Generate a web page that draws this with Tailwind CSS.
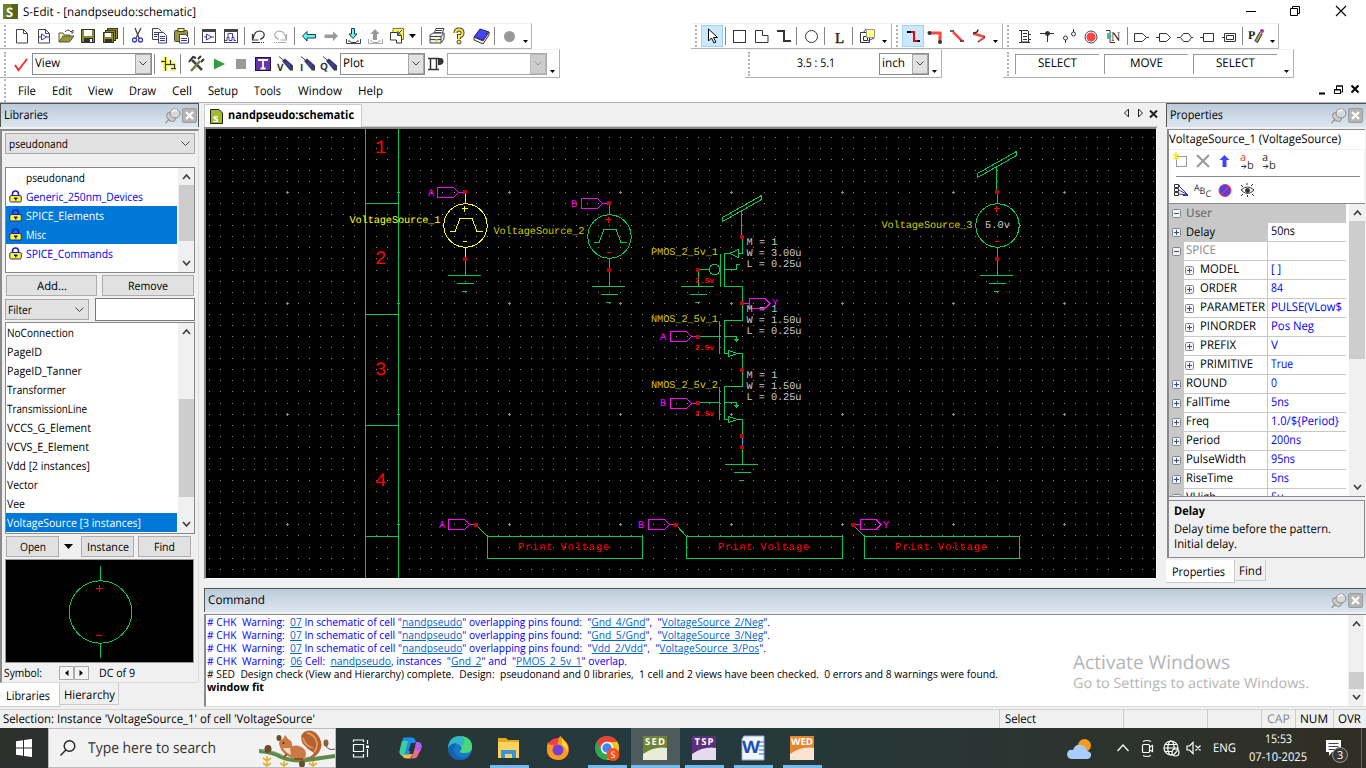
<!DOCTYPE html>
<html lang="en">
<head>
<meta charset="utf-8">
<title>S-Edit - [nandpseudo:schematic]</title>
<script src="https://cdn.jsdelivr.net/npm/@tailwindcss/browser@4"></script>
</head>
<body class="w-[1366px] h-[768px] overflow-hidden bg-[#f0f0f0] font-['Open_Sans','Noto_Sans',sans-serif] text-[12px] text-black flex flex-col whitespace-nowrap leading-none [text-rendering:geometricPrecision] [&_[data-w]]:shrink-0 [&_[data-w]]:inline-block [&_[data-w]]:origin-left">

<svg class="hidden">
  <defs>
    <g id="tri"><path d="M0 0h7L3.500 4z"/></g>
    <g id="page"><path d="M5.500 4.500h7l4 4v9.500h-11z" fill="#fff" stroke="#444"/><path d="M12.500 4.500v4h4" fill="none" stroke="#444"/></g>
    <g id="pin"><path d="M2.500 16l4-4" stroke="#999" stroke-width="1.500"/><ellipse cx="8" cy="10" rx="3.500" ry="5" transform="rotate(-45 8 10)" fill="#ccc" stroke="#8a8a8a"/><ellipse cx="12" cy="6.500" rx="5" ry="4.500" fill="#d8d8d8" stroke="#8a8a8a"/><path d="M9 5q2-3 5-1.500" stroke="#fff" stroke-width="1.500" fill="none"/></g>
    <g id="xbtn"><rect x=".5" y=".5" width="14" height="14" rx="1.500" fill="#b4b4b4" stroke="#9c9c9c"/><path d="M4 4l7 7M11 4l-7 7" stroke="#fff" stroke-width="2.200"/></g>
    <g id="lock"><path d="M3.500 6V4a3 3 0 0 1 6 0V6" fill="none" stroke="#2020c0" stroke-width="1.600"/><rect x=".8" y="5.500" width="11.500" height="6.500" rx="1.500" fill="#ff0" stroke="#2020c0"/><path d="M5 7.500h3.500v1.500h-1v1.500h-1.500v-1.500h-1z" fill="#1010c0"/></g>
    <g id="box"><rect x=".5" y=".5" width="8" height="8" rx="1" fill="#f4f4f4" stroke="#848484"/><path d="M2 4.500h5" stroke="#2a4fa0"/></g>
    <g id="boxp"><rect x=".5" y=".5" width="8" height="8" rx="1" fill="#f4f4f4" stroke="#848484"/><path d="M2 4.500h5M4.500 2v5" stroke="#2a4fa0"/></g>
    <g id="probe"><path d="M8 8l3-2.500 8 7v5h-3z" fill="#3c3c46"/><path d="M5 3.500l5 4" stroke="#444"/><path d="M12 9.500l4 4" stroke="#3a3af0" stroke-width="2"/></g>
  </defs>
</svg>

<!-- Title bar -->
<header class="h-[23px] bg-white flex items-center pl-[3px] shrink-0">
  <svg class="w-[15px] h-[15px]" viewBox="0 0 15 15"><rect width="15" height="15" fill="#6f7e1e"/><path d="M9 0h6v15H3z" fill="#566317"/><text x="3" y="12.500" font-size="13" font-weight="700" fill="#fff" font-family="Open Sans">S</text></svg>
  <span class="ml-[5px]" data-w="173">S-Edit - [nandpseudo:schematic]</span>
  <svg class="ml-auto mr-[17px] w-[110px] h-[20px]" viewBox="0 0 110 20" fill="none" stroke="#000"><path d="M7 9.500h10"/><path d="M51.500 6.500h7v7h-7z M53.500 6.500v-2h7v7h-2"/><path d="M97 4l10 10M107 4l-10 10" stroke-width="1.100"/></svg>
</header>

<!-- Toolbar row 1 -->
<div class="h-[26px] bg-white flex shrink-0">
  <div class="w-[532px] flex items-center border-b border-r border-[#b0b0b0] border-t border-t-[#f0f0f6]">
    <i class="ml-[4px] mr-[5px] h-[22px] border-l-2 border-dotted border-[#b4b4b4]"></i>
    <svg class="w-[22px] h-[22px]" viewBox="0 0 22 22"><use href="#page"/></svg>
    <svg class="w-[22px] h-[22px]" viewBox="0 0 22 22"><use href="#page"/><path d="M8.500 9v6l5-3zM6 12h3M13 12h3" fill="none" stroke="#3a3ac0"/></svg>
    <svg class="w-[22px] h-[22px]" viewBox="0 0 22 22"><path d="M4 17V8h4l1.500 2H15v2" fill="#fff8a0" stroke="#555"/><path d="M4 17l4-6h11l-4.500 6z" fill="#9a9a2a" stroke="#555"/><path d="M10 7q3-4 6 0l2-2M16 8h2V5" fill="none" stroke="#444"/></svg>
    <svg class="w-[22px] h-[22px]" viewBox="0 0 22 22"><rect x="4.500" y="4.500" width="13" height="13" fill="#8c8c28" stroke="#333"/><rect x="7" y="5" width="8" height="6" fill="#fff"/><rect x="7" y="13" width="9" height="5" fill="#333"/><rect x="13" y="14" width="2" height="3" fill="#fff"/></svg>
    <svg class="w-[22px] h-[22px]" viewBox="0 0 22 22"><rect x="8.500" y="3.500" width="10" height="10" fill="#8c8c28" stroke="#333"/><rect x="6.500" y="5.500" width="10" height="10" fill="#8c8c28" stroke="#333"/><rect x="4.500" y="7.500" width="10" height="10" fill="#8c8c28" stroke="#333"/><rect x="6" y="8" width="6" height="4" fill="#fff"/><rect x="6" y="14" width="7" height="4" fill="#333"/></svg>
    <i class="mx-[2px] w-px h-[18px] bg-[#888]"></i>
    <svg class="w-[22px] h-[22px]" viewBox="0 0 22 22" fill="none"><path d="M9 3l4 10M15 3l-5 10" stroke="#444" stroke-width="1.300"/><circle cx="8.500" cy="15" r="2" stroke="#3a3ac0" stroke-width="1.300"/><circle cx="14.500" cy="15" r="2" stroke="#3a3ac0" stroke-width="1.300"/></svg>
    <svg class="w-[22px] h-[22px]" viewBox="0 0 22 22"><path d="M4.500 3.500h6l3 3v8h-9z" fill="#fff" stroke="#444"/><path d="M6 7.500h5M6 9.500h5M6 11.500h3" stroke="#444"/><path d="M10.500 7.500h5l3 3v7.500h-8z" fill="#fff" stroke="#3a3a90"/><path d="M12 11.500h5M12 13.500h5M12 15.500h5" stroke="#3a3a90"/></svg>
    <svg class="w-[22px] h-[22px]" viewBox="0 0 22 22"><rect x="4.500" y="5.500" width="13" height="11" rx="1" fill="#98983c" stroke="#444"/><rect x="8" y="3.500" width="6" height="3" fill="#ff6" stroke="#444"/><path d="M9.500 9.500h6l3 3v5.500h-9z" fill="#fff" stroke="#3a3a90"/><path d="M11 13.500h6M11 15.500h6" stroke="#3a3a90"/></svg>
    <i class="mx-[2px] w-px h-[18px] bg-[#888]"></i>
    <svg class="ml-px w-[22px] h-[22px]" viewBox="0 0 22 22"><rect x="4.500" y="4.500" width="13" height="13" fill="#fff" stroke="#444"/><path d="M4 5.500h14" stroke="#444" stroke-width="3"/><path d="M8.500 9v6l5-3zM6 12h3M13 12h3" fill="none" stroke="#3a3ac0"/></svg>
    <svg class="w-[22px] h-[22px]" viewBox="0 0 22 22"><rect x="4.500" y="4.500" width="13" height="13" fill="#fff" stroke="#444"/><path d="M4 5.500h14" stroke="#444" stroke-width="3"/><path d="M5 15.500h2v-3h2v3h3v-3h2v3h2M8 12v-3.500h4.500v3.500" fill="none" stroke="#3a3ac0"/></svg>
    <i class="mx-[2px] w-px h-[18px] bg-[#888]"></i>
    <svg class="w-[22px] h-[22px]" viewBox="0 0 22 22" fill="none"><path d="M5.500 9v6h6M6 14q1-8 7-8 5 1 4 5-1 3-4 3" stroke="#333" stroke-width="1.200"/><path d="M5 17.500h12" stroke="#333" stroke-dasharray="8 1 1 1"/></svg>
    <svg class="w-[22px] h-[22px]" viewBox="0 0 22 22" fill="none"><path d="M17.500 9v6h-6M17 14q-1-8-7-8-5 1-4 5 1 3 4 3" stroke="#aaa" stroke-width="1.200"/><path d="M5 17.500h12" stroke="#aaa" stroke-dasharray="1 1 1 1 8"/></svg>
    <i class="mx-[3px] w-px h-[18px] bg-[#888]"></i>
    <svg class="w-[22px] h-[22px]" viewBox="0 0 22 22"><path d="M4.500 11L9 6.500V9.500h8.500v3.500H9v3z" fill="#5ff" stroke="#333"/></svg>
    <svg class="w-[22px] h-[22px]" viewBox="0 0 22 22"><path d="M18 11l-5-4.500V9.500H4.500v3.500H13v3z" fill="#999"/></svg>
    <svg class="w-[22px] h-[22px]" viewBox="0 0 22 22"><path d="M9.500 3.500h3V9h2.500l-4 4.500-4-4.500h2.500z" fill="#5ff" stroke="#333"/><path d="M4.500 14v4.500h14V14M6 16h2l1 1.500h5l1-1.500h2" fill="none" stroke="#444"/></svg>
    <svg class="w-[22px] h-[22px]" viewBox="0 0 22 22"><path d="M11 4l4.500 5H13v6H9V9H6.500z" fill="#999"/><path d="M4.500 14v4.500h14V14M6 16h2l1 1.500h5l1-1.500h2" fill="none" stroke="#aaa"/></svg>
    <svg class="w-[22px] h-[22px]" viewBox="0 0 22 22"><path d="M7 3.500h10.500v11H7z" fill="#ff3" stroke="#777"/><path d="M4.500 7.500h7v3h4v7.500h-5v-3h-6z" fill="#fff" stroke="#333"/><path d="M16 5l-4 4M12 6v3h3" stroke="#33c" fill="none"/></svg>
    <svg class="w-[9px] h-[22px]" viewBox="0 0 9 22"><use href="#tri" x="1" y="9"/></svg>
    <i class="mx-[4px] w-px h-[18px] bg-[#888]"></i>
    <svg class="w-[22px] h-[22px]" viewBox="0 0 22 22"><path d="M8 9l2-5.500h8L16 9" fill="#fff" stroke="#444"/><path d="M4 10l3-2h11v6l-3 4H4z" fill="#eee" stroke="#444"/><path d="M4 11.500h11l3-3M4 14.500h11M15 11v7M10 5.500h6M9 7.500h6" stroke="#444" fill="none"/><path d="M9 15.500h3" stroke="#dd0" stroke-width="2"/></svg>
    <svg class="w-[22px] h-[22px]" viewBox="0 0 22 22"><path d="M7.500 8q0-3.500 3.500-3.500t3.500 3.500-3.500 3v3" fill="none" stroke="#444" stroke-width="4"/><path d="M7.500 8q0-3.500 3.500-3.500t3.500 3.500-3.500 3v3" fill="none" stroke="#fe3" stroke-width="2"/><circle cx="11" cy="17" r="2" fill="#fe3" stroke="#444"/></svg>
    <svg class="w-[22px] h-[22px]" viewBox="0 0 22 22"><path d="M4 12l6-8 9 3-6 8z" fill="#44f" stroke="#226"/><path d="M4 12v3l9 4 6-9V7l-6 9z" fill="#eee" stroke="#333"/></svg>
    <i class="mx-[2px] w-px h-[18px] bg-[#888]"></i>
    <svg class="w-[26px] h-[22px]" viewBox="0 0 26 22"><circle cx="12.500" cy="11.500" r="5.500" fill="#999"/></svg>
    <svg class="w-[8px] h-[22px]" viewBox="0 0 8 22"><path d="M0 15h5L2.500 18z"/></svg>
  </div>
  <div class="ml-[159px] w-[201px] flex items-center border-b border-r border-[#b0b0b0] border-t border-t-[#f0f0f6]">
    <i class="ml-[4px] mr-[4px] h-[22px] border-l-2 border-dotted border-[#b4b4b4]"></i>
    <svg class="w-[22px] h-[22px] bg-[#cce8ff] border border-[#99d1ff]" viewBox="1 1 20 20"><path d="M7.500 4v12l3-3 2.500 5 2-1-2.500-4.500h4z" fill="#fff" stroke="#000"/></svg>
    <i class="mx-[2px] w-px h-[18px] bg-[#888]"></i>
    <svg class="w-[22px] h-[22px]" viewBox="0 0 22 22" fill="none" stroke="#333"><rect x="5.500" y="5.500" width="12" height="12"/></svg>
    <svg class="w-[22px] h-[22px]" viewBox="0 0 22 22" fill="none" stroke="#333"><path d="M5.500 5.500h7v5h5.500v7H5.500z"/></svg>
    <svg class="w-[22px] h-[22px]" viewBox="0 0 22 22" fill="none" stroke="#333" stroke-width="2"><path d="M5 6h7v10h7"/></svg>
    <i class="mx-[2px] w-px h-[18px] bg-[#888]"></i>
    <svg class="ml-px w-[22px] h-[22px]" viewBox="0 0 22 22" fill="none" stroke="#333"><circle cx="11.500" cy="11.500" r="6"/></svg>
    <i class="mx-[2px] w-px h-[18px] bg-[#888]"></i>
    <svg class="ml-px w-[22px] h-[22px]" viewBox="0 0 22 22"><text x="7" y="18" font-family="Liberation Serif" font-size="15" fill="#222" stroke="#222" stroke-width=".4">L</text></svg>
    <i class="mx-[2px] w-px h-[18px] bg-[#888]"></i>
    <svg class="w-[24px] h-[22px]" viewBox="0 0 24 22" fill="none" stroke="#333"><path d="M5.500 7.500h9v10h-9zM8.500 11.500h4v4h-4z"/><path d="M11.500 4.500h8v8h-8z" fill="#ff8" stroke="#998"/><path d="M8 8l3-4M13 16l6-3" stroke="#33c"/></svg>
    <svg class="w-[9px] h-[22px]" viewBox="0 0 9 22"><path d="M3 15h5L5.500 18z"/></svg>
  </div>
  <div class="w-[111px] flex items-center border-b border-r border-[#b0b0b0] border-t border-t-[#f0f0f6]">
    <i class="ml-[4px] mr-[4px] h-[22px] border-l-2 border-dotted border-[#b4b4b4]"></i>
    <svg class="w-[22px] h-[22px] bg-[#cce8ff] border border-[#99d1ff]" viewBox="1 1 20 20" fill="none" stroke-width="2"><path d="M5 7h6M12 16h6" stroke="#000"/><path d="M9 7h3v9h3" stroke="#e00"/></svg>
    <svg class="w-[22px] h-[22px]" viewBox="0 0 22 22" fill="none"><path d="M5 8h11v8" stroke="#f44" stroke-width="3"/><circle cx="5.500" cy="8" r="2" fill="#333"/><circle cx="16" cy="17" r="2" fill="#333"/></svg>
    <svg class="w-[22px] h-[22px]" viewBox="0 0 22 22" fill="none"><path d="M7 7l9 9" stroke="#f44" stroke-width="2.500"/><path d="M4 6h4M14 16h4" stroke="#333" stroke-width="1.500"/></svg>
    <svg class="w-[22px] h-[22px]" viewBox="0 0 22 22" fill="none"><path d="M5 8.500l12 3.500" stroke="#f44" stroke-width="2.500"/><path d="M5 8q5 0 5-3.500M17 12l-7 5" stroke="#333" stroke-width="1.500"/><path d="M11 16l5-3" stroke="#f44" stroke-width="2"/></svg>
    <svg class="w-[9px] h-[22px]" viewBox="0 0 9 22"><path d="M3 15h5L5.500 18z"/></svg>
  </div>
  <div class="w-[276px] flex items-center border-b border-r border-[#b0b0b0] border-t border-t-[#f0f0f6]">
    <i class="ml-[4px] mr-[5px] h-[22px] border-l-2 border-dotted border-[#b4b4b4]"></i>
    <svg class="w-[22px] h-[22px]" viewBox="0 0 22 22" fill="none" stroke="#333"><path d="M5 5.500h9M5 17.500h11M7.500 6v11h7V6M9 8.500h4M9 11.500h4M9 14.500h4M14 9.500h3M14 14.500h3"/></svg>
    <svg class="w-[22px] h-[22px]" viewBox="0 0 22 22" fill="#333" stroke="#333"><path d="M4 8.500h14M11.500 8v9"/><circle cx="11.500" cy="8.500" r="2"/></svg>
    <svg class="w-[22px] h-[22px]" viewBox="0 0 22 22" fill="none" stroke="#333"><circle cx="7.500" cy="13" r="2"/><path d="M7.500 15v3M15.500 4v3"/><circle cx="15.500" cy="9" r="2"/></svg>
    <svg class="w-[22px] h-[22px]" viewBox="0 0 22 22"><circle cx="11" cy="12" r="6" fill="#fff" stroke="#444"/><circle cx="11" cy="12" r="4.500" fill="#f44"/></svg>
    <svg class="w-[22px] h-[22px]" viewBox="0 0 22 22"><path d="M4 5.500h4v12h5M6 8v6" stroke="#333" fill="none"/><circle cx="7.500" cy="11" r="1.800" fill="#0cc"/><text x="9" y="16" font-size="13" font-family="Liberation Serif" fill="#222">N</text></svg>
    <i class="ml-[3px] mr-[2px] w-px h-[18px] bg-[#888]"></i>
    <svg class="w-[22px] h-[22px]" viewBox="0 0 22 22" fill="none" stroke="#333"><path d="M4.500 8.500h8l4 4-4 4h-8zM16 12.500h3"/></svg>
    <svg class="w-[22px] h-[22px]" viewBox="0 0 22 22" fill="none" stroke="#333"><path d="M7.500 8.500h7l4 4-4 4h-7zM4 12.500h3"/></svg>
    <svg class="w-[22px] h-[22px]" viewBox="0 0 22 22" fill="none" stroke="#333"><path d="M6.500 12.500l3-4h5l3 4-3 4h-5zM3 12.500h3M17 12.500h2"/></svg>
    <svg class="w-[22px] h-[22px]" viewBox="0 0 22 22" fill="none" stroke="#333"><path d="M7.500 8.500h10v8h-10zM4 12.500h3"/></svg>
    <svg class="w-[22px] h-[22px]" viewBox="0 0 22 22" fill="none" stroke="#333"><path d="M6.500 8.500h11v8h-11zM8.500 10.500h7v4h-7zM4 12.500h2"/></svg>
    <i class="mx-[2px] w-px h-[18px] bg-[#888]"></i>
    <svg class="w-[22px] h-[22px]" viewBox="0 0 22 22"><text x="3" y="14" font-size="12" font-weight="700" font-family="Liberation Serif" fill="#222">P</text><path d="M11 17l5-9" stroke="#444" stroke-width="4"/><path d="M11.500 16l4.500-8" stroke="#aa4" stroke-width="2"/><circle cx="17" cy="6" r="2" fill="#a3a"/></svg>
    <svg class="w-[9px] h-[22px]" viewBox="0 0 9 22"><path d="M3 15h5L5.500 18z"/></svg>
  </div>
</div>

<!-- Toolbar row 2 -->
<div class="h-[29px] bg-white flex shrink-0 [&_[data-w]]:pb-[2px]">
  <div class="w-[560px] flex items-center border-b border-r border-[#b0b0b0] border-t border-t-[#f0f0f6]">
    <i class="ml-[4px] mr-[4px] h-[24px] border-l-2 border-dotted border-[#b4b4b4]"></i>
    <svg class="w-[22px] h-[22px]" viewBox="0 0 22 22"><path d="M5 12l3.500 5L17 6" fill="none" stroke="#e33" stroke-width="2"/></svg>
    <div class="w-[120px] h-[22px] border border-[#8a8a8a] flex items-center bg-white"><span class="ml-[2px]" data-w="25">View</span><i class="ml-auto w-[16px] h-[20px] bg-[#e1e1e1] border border-[#a8a8a8] flex items-center justify-center"><svg class="w-[8px] h-[5px]" viewBox="0 0 8 5"><path d="M.5.500L4 4 7.500.5" fill="none" stroke="#444"/></svg></i></div>
    <i class="mx-[2px] w-px h-[20px] bg-[#888]"></i>
    <svg class="w-[22px] h-[22px]" viewBox="0 0 22 22" fill="none"><path d="M4 8.500h5M8.500 4v14M8 11.500h10M13.500 7v5M17.500 11v5M14 16h5M6 14h4" stroke="#ee2" stroke-width="3.500"/><path d="M4 8.500h5M8.500 4v14M8 11.500h10M13.500 7v5M17.500 11v5M14 15.500h5" stroke="#335"/></svg>
    <i class="mx-[1px] w-px h-[20px] bg-[#888]"></i>
    <svg class="ml-[2px] w-[24px] h-[22px]" viewBox="0 0 24 22" fill="none"><path d="M18 17L8 7" stroke="#444" stroke-width="2.500"/><path d="M7 18L16 8" stroke="#774" stroke-width="2.500"/><path d="M5 9l4-5 3 1M14 6l3-3M17 9l3-3" stroke="#333" stroke-width="2"/></svg>
    <svg class="w-[22px] h-[22px]" viewBox="0 0 22 22"><path d="M6 5.500L17 11 6 16.500z" fill="#2f9e3c"/></svg>
    <svg class="w-[22px] h-[22px]" viewBox="0 0 22 22"><rect x="6" y="6" width="10" height="10" fill="#999"/></svg>
    <svg class="w-[22px] h-[22px]" viewBox="0 0 22 22"><rect x="3.500" y="4.500" width="15" height="13" fill="#63a" stroke="#213"/><path d="M6 7h10M11 7v9M8.500 15.500h5" stroke="#fff" stroke-width="1.800"/></svg>
    <svg class="w-[22px] h-[22px]" viewBox="0 0 22 22"><use href="#probe"/><text x="3" y="18" font-size="10" font-weight="700" fill="#333">V</text></svg>
    <svg class="w-[22px] h-[22px]" viewBox="0 0 22 22"><use href="#probe"/><text x="4" y="18" font-size="10" font-weight="700" fill="#333">I</text></svg>
    <svg class="w-[22px] h-[22px]" viewBox="0 0 22 22"><use href="#probe"/><text x="2" y="17" font-size="10" font-weight="700" fill="#333">Q</text></svg>
    <div class="w-[85px] h-[22px] border border-[#8a8a8a] flex items-center bg-white"><span class="ml-[2px]" data-w="21">Plot</span><i class="ml-auto w-[16px] h-[20px] bg-[#e1e1e1] border border-[#a8a8a8] flex items-center justify-center"><svg class="w-[8px] h-[5px]" viewBox="0 0 8 5"><path d="M.5.500L4 4 7.500.5" fill="none" stroke="#444"/></svg></i></div>
    <svg class="w-[22px] h-[22px]" viewBox="0 0 22 22"><path d="M3 5.500h7M3 16.500h7M5.500 5v12M10 5.500h4M11.500 5v12M9 16.500h5" stroke="#333" stroke-width="1.500"/><path d="M13 5h2q3.500 0 3.500 3.200T15 12h-2z" fill="#333"/></svg>
    <div class="w-[100px] h-[22px] border border-[#a8a8a8] flex items-center bg-white"><i class="ml-auto w-[16px] h-[20px] bg-[#ccc] border border-[#bbb] flex items-center justify-center"><svg class="w-[8px] h-[5px]" viewBox="0 0 8 5"><path d="M.5.500L4 4 7.500.5" fill="none" stroke="#999"/></svg></i></div>
    <svg class="w-[9px] h-[22px]" viewBox="0 0 9 22"><path d="M3 17h5L5.500 20z"/></svg>
  </div>
  <div class="ml-[185px] w-[197px] flex items-center border-b border-r border-[#b0b0b0] border-t border-t-[#f0f0f6]">
    <i class="ml-[3px] h-[24px] border-l-2 border-dotted border-[#b4b4b4]"></i>
    <span class="ml-[47px]" data-w="38">3.5 : 5.1</span>
    <div class="ml-[44px] w-[50px] h-[22px] border border-[#8a8a8a] flex items-center bg-white"><span class="ml-[2px]" data-w="23">inch</span><i class="ml-auto w-[16px] h-[20px] bg-[#e1e1e1] border border-[#a8a8a8] flex items-center justify-center"><svg class="w-[8px] h-[5px]" viewBox="0 0 8 5"><path d="M.5.500L4 4 7.500.5" fill="none" stroke="#444"/></svg></i></div>
    <svg class="w-[9px] h-[22px]" viewBox="0 0 9 22"><path d="M3 17h5L5.500 20z"/></svg>
  </div>
  <div class="ml-[61px] w-[291px] flex items-center border-b border-r border-[#b0b0b0] border-t border-t-[#f0f0f6]">
    <i class="ml-[4px] mr-[6px] h-[24px] border-l-2 border-dotted border-[#b4b4b4]"></i>
    <div class="w-[84px] h-[20px] border-l border-t border-[#999] flex items-center justify-center mr-[5px]"><span data-w="39">SELECT</span></div>
    <div class="w-[84px] h-[20px] border-l border-t border-[#999] flex items-center justify-center mr-[5px]"><span data-w="33">MOVE</span></div>
    <div class="w-[84px] h-[20px] border-l border-t border-[#999] flex items-center justify-center"><span data-w="39">SELECT</span></div>
    <svg class="ml-[4px] w-[9px] h-[22px]" viewBox="0 0 9 22"><path d="M3 17h5L5.500 20z"/></svg>
  </div>
</div>

<!-- Menu -->
<nav class="h-[25px] bg-white border-b border-[#b0b0b0] flex items-center shrink-0 pl-[4px] [&_[data-w]]:pt-px">
  <i class="h-[23px] border-l-2 border-dotted border-[#b4b4b4]"></i>
  <span class="ml-[12px]" data-w="18">File</span><span class="ml-[16px]" data-w="20">Edit</span><span class="ml-[16px]" data-w="25">View</span><span class="ml-[16px]" data-w="27">Draw</span><span class="ml-[16px]" data-w="20">Cell</span><span class="ml-[16px]" data-w="30">Setup</span><span class="ml-[16px]" data-w="27">Tools</span><span class="ml-[17px]" data-w="44">Window</span><span class="ml-[16px]" data-w="25">Help</span>
  <svg class="ml-auto mr-[4px] w-[44px] h-[16px]" viewBox="0 0 44 16" fill="none" stroke="#000"><path d="M1 11.500h6" stroke-width="2"/><path d="M16.500 7.500h6v4h-6zM18.500 7v-3h6v6h-2M18 4h7M16 8h7"/><path d="M33.500 3.500l7 7M40.500 3.500l-7 7" stroke-width="2"/></svg>
</nav>

<!-- Work area -->
<main class="flex h-[606px] shrink-0">
  <!-- Libraries dock -->
  <aside class="w-[199px] flex flex-col">
    <div class="h-[24px] border-t border-l border-r border-[#555] bg-linear-to-b from-[#bccbda] to-[#dde6ef] flex items-center pl-[3px] [&_[data-w]]:pb-[2px]"><span data-w="44">Libraries</span><svg class="ml-auto w-[18px] h-[18px]" viewBox="0 0 18 18"><use href="#pin"/></svg><svg class="ml-[1px] mr-[1px] w-[15px] h-[15px]" viewBox="0 0 15 15"><use href="#xbtn"/></svg></div>
    <div class="mt-[2px] h-[554px] border-t-2 border-l-2 border-[#8a8a8a] border-r border-r-[#ddd] border-b border-b-[#ddd] flex flex-col pl-[3px] pt-[2px] [&_[data-w]]:pt-[2px]">
      <div class="w-[190px] h-[21px] bg-[#e1e1e1] border border-[#a8a8a8] flex items-center justify-between pl-[3px] pr-[4px]"><span class="text-[11.500px]" data-w="59">pseudonand</span><svg class="w-[9px] h-[5px]" viewBox="0 0 9 5"><path d="M.5.500l4 4 4-4" fill="none" stroke="#444"/></svg></div>
      <div class="mt-[13px] w-[190px] h-[106px] border border-[#888] bg-white flex text-[11.500px]">
        <div class="w-[171px] text-[#00e]">
          <div class="h-[19px] flex items-center pl-[20px] text-black"><span data-w="59">pseudonand</span></div>
          <div class="h-[19px] flex items-center pl-[3px]"><svg class="w-[13px] h-[13px] mr-[4px]" viewBox="0 0 13 13"><use href="#lock"/></svg><span data-w="117">Generic_250nm_Devices</span></div>
          <div class="h-[19px] flex items-center pl-[3px] bg-[#0078d7] text-white"><svg class="w-[13px] h-[13px] mr-[4px]" viewBox="0 0 13 13"><use href="#lock"/></svg><span data-w="78">SPICE_Elements</span></div>
          <div class="h-[19px] flex items-center pl-[3px] bg-[#0078d7] text-white"><svg class="w-[13px] h-[13px] mr-[4px]" viewBox="0 0 13 13"><use href="#lock"/></svg><span data-w="20">Misc</span></div>
          <div class="h-[19px] flex items-center pl-[3px]"><svg class="w-[13px] h-[13px] mr-[4px]" viewBox="0 0 13 13"><use href="#lock"/></svg><span data-w="87">SPICE_Commands</span></div>
        </div>
        <div class="ml-[1px] w-[16px] bg-[#f0f0f0] flex flex-col items-center"><svg class="w-[9px] h-[17px]" viewBox="0 0 9 17"><path d="M1 11l3.500-4L8 11" fill="none" stroke="#444" stroke-width="1.800"/></svg><i class="w-[15px] h-[56px] bg-[#cdcdcd]"></i><svg class="mt-auto w-[9px] h-[17px]" viewBox="0 0 9 17"><path d="M1 6l3.500 4L8 6" fill="none" stroke="#444" stroke-width="1.800"/></svg></div>
      </div>
      <div class="mt-[2px] ml-[1px] flex gap-[5px] text-[11.500px]"><div class="w-[91px] h-[21px] bg-[#e1e1e1] border border-[#adadad] flex items-center justify-center"><span data-w="30">Add...</span></div><div class="w-[92px] h-[21px] bg-[#e1e1e1] border border-[#adadad] flex items-center justify-center"><span data-w="40">Remove</span></div></div>
      <div class="mt-[2px] flex gap-[6px] text-[11.500px]"><div class="mt-px w-[84px] h-[21px] bg-[#e1e1e1] border border-[#a8a8a8] flex items-center justify-between pl-[2px] pr-[4px]"><span data-w="24">Filter</span><svg class="w-[9px] h-[5px]" viewBox="0 0 9 5"><path d="M.5.500l4 4 4-4" fill="none" stroke="#444"/></svg></div><div class="w-[100px] h-[23px] bg-white border border-[#7a7a7a]"></div></div>
      <div class="mt-[1px] w-[190px] h-[212px] border border-[#888] bg-white flex text-[11.500px]">
        <div class="w-[171px]">
          <div class="h-[19px] flex items-center pl-[1px]"><span data-w="67">NoConnection</span></div>
          <div class="h-[19px] flex items-center pl-[1px]"><span data-w="35">PageID</span></div>
          <div class="h-[19px] flex items-center pl-[1px]"><span data-w="75">PageID_Tanner</span></div>
          <div class="h-[19px] flex items-center pl-[1px]"><span data-w="59">Transformer</span></div>
          <div class="h-[19px] flex items-center pl-[1px]"><span data-w="80">TransmissionLine</span></div>
          <div class="h-[19px] flex items-center pl-[1px]"><span data-w="84">VCCS_G_Element</span></div>
          <div class="h-[19px] flex items-center pl-[1px]"><span data-w="82">VCVS_E_Element</span></div>
          <div class="h-[19px] flex items-center pl-[1px]"><span data-w="83">Vdd [2 instances]</span></div>
          <div class="h-[19px] flex items-center pl-[1px]"><span data-w="31">Vector</span></div>
          <div class="h-[19px] flex items-center pl-[1px]"><span data-w="18">Vee</span></div>
          <div class="h-[19px] flex items-center pl-[1px] bg-[#0078d7] text-white"><span data-w="134">VoltageSource [3 instances]</span></div>
        </div>
        <div class="ml-[1px] w-[16px] bg-[#f0f0f0] flex flex-col items-center"><svg class="w-[9px] h-[17px]" viewBox="0 0 9 17"><path d="M1 11l3.500-4L8 11" fill="none" stroke="#444" stroke-width="1.800"/></svg><i class="mt-[59px] w-[15px] h-[98px] bg-[#cdcdcd]"></i><svg class="mt-auto w-[9px] h-[17px]" viewBox="0 0 9 17"><path d="M1 6l3.500 4L8 6" fill="none" stroke="#444" stroke-width="1.800"/></svg></div>
      </div>
      <div class="mt-[2px] ml-[1px] flex items-center text-[11.500px]"><div class="w-[53px] h-[21px] bg-[#e1e1e1] border border-[#adadad] flex items-center justify-center"><span data-w="26">Open</span></div><svg class="mx-[4px] w-[13px] h-[8px]" viewBox="0 0 13 8"><path d="M1 1h9L5.500 6z"/></svg><div class="ml-[1px] w-[53px] h-[21px] bg-[#e1e1e1] border border-[#adadad] flex items-center justify-center"><span data-w="42">Instance</span></div><div class="ml-[4px] w-[53px] h-[21px] bg-[#e1e1e1] border border-[#adadad] flex items-center justify-center"><span data-w="21">Find</span></div></div>
      <svg class="mt-[2px] w-[189px] h-[104px] bg-black border border-[#999]" viewBox="6 560 187 102" fill="none" shape-rendering="crispEdges"><path d="M100.500 566v15M100.500 643v15" stroke="#00c864"/><circle cx="100.500" cy="612" r="31.200" stroke="#00c864"/><path d="M96 588.500h7M99.500 585v7M96 635.500h6" stroke="#f00"/></svg>
      <div class="flex items-center mt-[3px] text-[11.500px]"><span class="-ml-px" data-w="38">Symbol:</span>
        <svg class="ml-[17px] w-[30px] h-[14px]" viewBox="0 0 30 14"><path d="M.5.500h14v13H.5zM15.500.5h14v13h-14z" fill="#f4f4f4" stroke="#aaa"/><path d="M9.500 4v6L6 7zM20.500 4v6L24 7z"/></svg>
        <span class="ml-[10px]" data-w="36">DC of 9</span></div>
    </div>
    <div class="flex items-start"><div class="w-[60px] h-[24px] bg-white border-r border-b border-[#ccc] flex items-center pl-[6px] pt-[2px]"><span data-w="44">Libraries</span></div><div class="w-[59px] h-[22px] border-r border-b border-[#ccc] flex items-center pl-[4px] pt-[2px]"><span data-w="51">Hierarchy</span></div></div>
  </aside>

  <div class="ml-[5px] flex flex-col w-[1162px]">
    <div class="flex h-[482px]">
      <!-- Schematic view -->
      <section class="w-[954px] flex flex-col">
        <div class="h-[24px] flex items-end pt-[1px] [&_[data-w]]:pb-[2px]">
          <div class="h-full w-[158px] bg-white border-l border-t border-r border-[#ccc] flex items-center pl-[5px]"><svg class="w-[13px] h-[15px]" viewBox="0 0 13 15"><path d="M.5.500H9l3.500 3.500v10.500H.5z" fill="#a4bc28" stroke="#222"/><text x="3" y="12.500" font-size="11" font-weight="700" fill="#fff">s</text></svg><span class="ml-[5px] font-bold" data-w="126">nandpseudo:schematic</span></div>
          <div class="flex-1 h-full border-b border-[#ccc] flex items-center justify-end"><svg class="w-[40px] h-[14px]" viewBox="0 0 40 14" fill="none" stroke="#222"><path d="M10.500 1v8L6.500 5zM20.500 1v8l4-4z"/><path d="M32 2.500l7 7M39 2.500l-7 7" stroke-width="2"/></svg></div>
        </div>
        <svg class="h-[452px] w-[953px] border-t-2 border-l-2 border-[#888] border-r border-r-white border-b border-b-white bg-black" viewBox="206 129 950 449" id="sch" fill="none" stroke="#00c864" shape-rendering="crispEdges" font-family="'Liberation Mono',monospace" font-size="10.300">
          <path id="dots" stroke="none" fill="#8c8c8c"/>
          <path d="M365.500 128v450M398.500 128v450M365 203.500h33M365 314.500h33M365 425.500h33M365 536.500h33"/>
          <g fill="#f00" stroke="none" font-size="19"><text x="375" y="153">1</text><text x="375" y="264">2</text><text x="375" y="375">3</text><text x="375" y="486">4</text></g>
          <g id="gnd"><path d="M465.500 259v16.500M448 275.500h33M457 283.500h17M462 291.500h5"/></g>
          <use href="#gnd" x="144" y="11"/><use href="#gnd" x="532"/>
          <g stroke="#ff0"><circle cx="465.500" cy="225.500" r="21.700"/><path d="M465.500 192v12M465.500 247v12M462 208.500h6M464.500 206v6M463 241.500h4M450 231.500h5l5-13h12l5 13h6"/></g>
          <circle cx="609.500" cy="236.500" r="21.700"/><path d="M609.500 203v12M609.500 258v12M594 242.500h5l5-13h12l5 13h6"/><path d="M605 219.500h6M608.500 217v6M607 252.500h4" stroke="#f00"/>
          <circle cx="997.500" cy="225.500" r="21.700"/><path d="M997.500 192v12M997.500 247v12"/><path d="M994 208.500h6M996.500 206v6M995 241.500h4" stroke="#f00"/>
          <g id="vdd"><path d="M722.500 217.500L761.500 195.500v4L722.500 221.500zM741.500 210v27"/></g><use href="#vdd" x="255" y="-44"/>
          <g id="port" stroke="#f0f"><path d="M437.500 187.500h16l5 5-5 5h-16zM458 192.500h7"/></g>
          <use href="#port" x="144" y="11"/><use href="#port" x="233" y="144"/><use href="#port" x="233" y="211"/><use href="#port" x="11" y="332"/><use href="#port" x="211" y="332"/>
          <g stroke="#f0f"><path d="M742 303.500h7M749.500 298.500h15.500l5 5-5 5h-15.500zM853 524.500h7M860.500 519.500h15.500l5 5-5 5h-15.500z"/></g>
          <path d="M742.500 237v16.500h-4M724 253.500h5M729.500 253.500l9-4v8zM720.500 254v33M724.500 254v33M724 269.500h12v-5h4M724 286.500h18.500v34H724M698 269.500h11M698.500 270v17M681 286.500h33M690 294.500h17M695 302.500h5"/><circle cx="714.500" cy="269.500" r="5.300"/>
          <g id="nmos"><path d="M719.500 321v33M724.500 321v33M698 336.500h21M724 336.500h12.500v5M734 339.500h5M735 340.500h3M724 353.500h4M728.500 350.500v6l9-3zM737 353.500h5.500V370"/></g>
          <use href="#nmos" y="66"/><path d="M742.500 370v16.500H724M742.500 447v17.500M725 464.500h33M734 472.500h17M739 480.500h5"/><path d="M742.500 436v11" stroke="#3af"/>
          <path d="M476 525l11.500 11.500M676 525l10.500 11.500M853 525l11.500 11.500M487.500 536.500h155v22h-155zM686.500 536.500h156v22h-156zM864.500 536.500h155v22h-155z"/>
          <path fill="#c00000" stroke="none" d="M463 190h4v4h-4zM463 257h4v4h-4zM607 201h4v4h-4zM607 268h4v4h-4zM995 190h4v4h-4zM995 257h4v4h-4zM740 235h4v4h-4zM696 268h4v4h-4zM740 301h4v4h-4zM696 335h4v4h-4zM740 368h4v4h-4zM696 401h4v4h-4zM740 434h4v4h-4zM740 445h4v4h-4zM474 523h4v4h-4zM674 523h4v4h-4zM851 523h4v4h-4z"/>
          <g stroke="none">
            <g fill="#ff0"><text x="349.500" y="223" textLength="91">VoltageSource_1</text></g>
            <g fill="#d2c800"><text x="493.500" y="234" textLength="91">VoltageSource_2</text><text x="881.500" y="228" textLength="91">VoltageSource_3</text><text x="651" y="255" textLength="67">PMOS_2_5v_1</text><text x="651" y="322" textLength="67">NMOS_2_5v_1</text><text x="651" y="388" textLength="67">NMOS_2_5v_2</text></g>
            <g fill="#f0f"><text x="428" y="196">A</text><text x="571" y="207">B</text><text x="660" y="340">A</text><text x="660" y="406">B</text><text x="772" y="306">Y</text><text x="439" y="528">A</text><text x="638" y="528">B</text><text x="883" y="528">Y</text></g>
            <g fill="#c8c8c8"><text x="985" y="228" textLength="25">5.0v</text>
              <text x="746.500" y="245" textLength="31">M = 1</text><text x="746.500" y="256" textLength="55">W = 3.00u</text><text x="746.500" y="267" textLength="55">L = 0.25u</text>
              <text x="746.500" y="312" textLength="31">M = 1</text><text x="746.500" y="323" textLength="55">W = 1.50u</text><text x="746.500" y="334" textLength="55">L = 0.25u</text>
              <text x="746.500" y="378" textLength="31">M = 1</text><text x="746.500" y="389" textLength="55">W = 1.50u</text><text x="746.500" y="400" textLength="55">L = 0.25u</text></g>
            <g fill="#f00"><g font-size="7.500" font-weight="700"><text x="695" y="283" textLength="19">2.5v</text><text x="695" y="350" textLength="19">2.5v</text><text x="695" y="416" textLength="19">2.5v</text></g>
              <g font-size="10.500"><text x="518" y="550" textLength="91">Print Voltage</text><text x="718" y="550" textLength="91">Print Voltage</text><text x="895" y="550" textLength="92">Print Voltage</text></g></g>
          </g>
        </svg>
      </section>

      <!-- Properties dock -->
      <aside class="ml-[8px] w-[200px] flex flex-col">
        <div class="h-[24px] border-t border-l border-[#555] bg-linear-to-b from-[#bccbda] to-[#dde6ef] flex items-center pl-[3px] [&_[data-w]]:pb-[2px]"><span data-w="53">Properties</span><svg class="ml-auto w-[18px] h-[18px]" viewBox="0 0 18 18"><use href="#pin"/></svg><svg class="ml-[1px] mr-[3px] w-[15px] h-[15px]" viewBox="0 0 15 15"><use href="#xbtn"/></svg></div>
        <div class="mt-[2px] ml-[1px] w-[198px] border-t border-l-2 border-[#8a8a92]">
          <div class="h-[20px] bg-white flex items-center border-b border-[#eee] pb-[2px]"><span data-w="172">VoltageSource_1 (VoltageSource)</span></div>
          <svg class="w-[195px] h-[53px] bg-white block" viewBox="1169 150 195 53" fill="none" stroke="#333"><path d="M1176 176.500h184" stroke="#888"/><path d="M1176.500 156.500h10v10h-10z" stroke-dasharray="1 1"/><path d="M1173 154l6 5M1179 154l-6 5M1176 152v8" stroke="#ee2" stroke-width="1.500"/><path d="M1197 155l12 12M1209 155l-12 12" stroke="#999" stroke-width="2"/><path d="M1224.500 155l5 5h-3v7h-4v-7h-3z" fill="#44f" stroke="none"/><g stroke="none" font-size="11" fill="#333"><text x="1240" y="161" fill="#f33">a</text><text x="1247" y="169">b</text><text x="1262" y="161">a</text><text x="1269" y="169">b</text></g><path d="M1241 166.500h5M1244 164.500l2 2-2 2M1263 166.500h5M1266 164.500l2 2-2 2"/><path d="M1174.500 184.500h4v3h-4zM1174.500 188.500h4v3h-4zM1174.500 192.500h4v3h-4z"/><path d="M1179 186l9 9M1179 190l9 5M1179 194l9 1" stroke="#33c"/><path d="M1178 186l2-1M1183 195.500h5"/><g stroke="none" fill="#333" font-size="9"><text x="1194" y="191">A</text><text x="1199.500" y="194">B</text><text x="1205.500" y="197">C</text></g><circle cx="1225" cy="190.500" r="6" fill="#44f" stroke="#f33"/><path d="M1221 194.500l8-8" stroke="#f33" stroke-width="1.500"/><path d="M1241 190q6.500-6 13 0M1241 190q6.500 7 13 0M1243 187l-2-2M1247 185v-2M1251 186l2-2M1243 194l-2 2M1247.500 195v2M1252 194l2 2"/><circle cx="1247.500" cy="190.500" r="2" fill="#333"/></svg>
          <div class="h-[294px] border-y border-[#8a8a92] flex bg-white overflow-hidden [&_[data-w]]:pb-[2px]">
            <div class="w-[177px]">
              <div class="h-[19px] bg-[#c8c8c8] flex items-center pl-[3px]"><svg class="w-[9px] h-[9px]" viewBox="0 0 9 9"><use href="#box"/></svg><span class="ml-[5px] text-[#777] font-semibold" data-w="26">User</span></div>
              <div class="h-[19px] flex"><div class="w-[98px] bg-[#c8c8c8] flex items-center pl-[3px]"><svg class="w-[9px] h-[9px]" viewBox="0 0 9 9"><use href="#boxp"/></svg><span class="ml-[5px]" data-w="29">Delay</span></div><div class="flex-1 border-b border-l border-[#c8c8c8] flex items-center pl-[3px]"><span data-w="24">50ns</span></div></div>
              <div id="rows"></div>
            </div>
            <div class="ml-auto w-[16px] bg-[#f0f0f0] flex flex-col items-center"><svg class="w-[9px] h-[17px]" viewBox="0 0 9 17"><path d="M1 11l3.500-4L8 11" fill="none" stroke="#444" stroke-width="1.800"/></svg><i class="w-[16px] h-[138px] bg-[#cdcdcd]"></i><svg class="mt-auto w-[9px] h-[17px]" viewBox="0 0 9 17"><path d="M1 6l3.500 4L8 6" fill="none" stroke="#444" stroke-width="1.800"/></svg></div>
          </div>
          <div class="mt-[3px] h-[58px] border border-l-0 border-[#8a8a92] pl-[5px] pt-[4px]">
            <div class="h-[17px] font-bold"><span data-w="31">Delay</span></div>
            <div class="h-[15px] pt-[1px]"><span data-w="157">Delay time before the pattern.</span></div>
            <div class="h-[15px] pt-[1px]"><span data-w="63">Initial delay.</span></div>
          </div>
        </div>
        <div class="mt-[2px] flex items-start"><div class="w-[69px] h-[23px] bg-white border-r border-b border-[#ccc] flex items-center pl-[6px] pt-px"><span data-w="53">Properties</span></div><div class="w-[31px] h-[21px] border-r border-b border-[#ccc] flex items-center pl-[4px] pt-px"><span data-w="23">Find</span></div></div>
      </aside>
    </div>

    <!-- Command dock -->
    <section class="mt-[3px] h-[121px] flex flex-col relative">
      <div class="h-[24px] border-t border-l border-[#555] bg-linear-to-b from-[#bccbda] to-[#dde6ef] flex items-center pl-[3px] [&_[data-w]]:pb-[2px]"><span data-w="57">Command</span><svg class="ml-auto w-[18px] h-[18px]" viewBox="0 0 18 18"><use href="#pin"/></svg><svg class="ml-[1px] mr-[3px] w-[15px] h-[15px]" viewBox="0 0 15 15"><use href="#xbtn"/></svg></div>
      <div class="mt-[2px] h-[93px] border-t border-l-2 border-[#8a8a8a] border-b border-b-[#ddd] bg-white flex">
        <div class="flex-1 pl-[1px] pt-px text-[11px] text-[#00f] [&_u]:text-[#06c]">
          <div class="h-[13px] flex items-center whitespace-pre"><span data-w="563"># CHK  Warning:  <u>07</u> In schematic of cell "<u>nandpseudo</u>" overlapping pins found:  "<u>Gnd_4/Gnd</u>",  "<u>VoltageSource_2/Neg</u>".</span></div>
          <div class="h-[13px] flex items-center whitespace-pre"><span data-w="563"># CHK  Warning:  <u>07</u> In schematic of cell "<u>nandpseudo</u>" overlapping pins found:  "<u>Gnd_5/Gnd</u>",  "<u>VoltageSource_3/Neg</u>".</span></div>
          <div class="h-[13px] flex items-center whitespace-pre"><span data-w="559"># CHK  Warning:  <u>07</u> In schematic of cell "<u>nandpseudo</u>" overlapping pins found:  "<u>Vdd_2/Vdd</u>",  "<u>VoltageSource_3/Pos</u>".</span></div>
          <div class="h-[13px] flex items-center whitespace-pre"><span data-w="420"># CHK  Warning:  <u>06</u> Cell:  <u>nandpseudo</u>, instances  "<u>Gnd_2</u>" and  "<u>PMOS_2_5v_1</u>" overlap.</span></div>
          <div class="h-[13px] flex items-center whitespace-pre text-black"><span data-w="791"># SED  Design check (View and Hierarchy) complete.  Design:  pseudonand and 0 libraries,  1 cell and 2 views have been checked.  0 errors and 8 warnings were found.</span></div>
          <div class="h-[13px] flex items-center text-black font-bold"><span data-w="57">window fit</span></div>
        </div>
        <div class="w-[16px] mr-[2px] bg-[#f0f0f0] flex flex-col items-center"><svg class="w-[9px] h-[17px]" viewBox="0 0 9 17"><path d="M1 11l3.500-4L8 11" fill="none" stroke="#444" stroke-width="1.800"/></svg><i class="mt-[40px] w-[15px] h-[17px] bg-[#cdcdcd]"></i><svg class="mt-auto w-[9px] h-[17px]" viewBox="0 0 9 17"><path d="M1 6l3.500 4L8 6" fill="none" stroke="#444" stroke-width="1.800"/></svg></div>
      </div>
      <div class="absolute left-[869px] top-[65px] text-[#b4b4b4]"><div class="text-[19px] h-[24px]"><span data-w="157">Activate Windows</span></div><div class="text-[14px]"><span data-w="236">Go to Settings to activate Windows.</span></div></div>
    </section>
  </div>
</main>

<!-- Status bar -->
<div class="h-[19px] shrink-0 border-t border-[#d4d4d4] flex items-center pl-[3px]">
  <span data-w="312">Selection: Instance 'VoltageSource_1' of cell 'VoltageSource'</span>
  <div class="ml-auto w-[124px] h-full border-l border-[#ccc] flex items-center pl-[5px]"><span data-w="31">Select</span></div>
  <div class="w-[84px] h-full border-l border-[#ccc]"></div><div class="w-[54px] h-full border-l border-[#ccc]"></div>
  <div class="w-[34px] h-full border-l border-[#ccc] flex items-center pl-[5px] text-[#888]"><span data-w="23">CAP</span></div>
  <div class="w-[38px] h-full border-l border-[#ccc] flex items-center pl-[4px]"><span data-w="28">NUM</span></div>
  <div class="w-[33px] h-full border-l border-[#ccc] flex items-center pl-[4px]"><span data-w="23">OVR</span></div>
</div>

<!-- Taskbar -->
<footer class="h-[40px] shrink-0 flex bg-linear-to-r from-[#2e302e] via-[#233a3e] to-[#302e24] text-white">
  <svg class="w-[48px] h-[40px]" viewBox="0 0 48 40" fill="#fff"><path d="M16 13.300l7-1v7.200h-7zM24 12.100l8-1.100v8.500h-8zM16 20.500h7v7.200l-7-1zM24 20.500h8V29l-8-1.100z"/></svg>
  <div class="w-[288px] bg-[#f2f2f2] border border-[#bbb] flex items-center text-[#333] text-[15px]"><svg class="ml-[10px] w-[18px] h-[18px]" viewBox="0 0 18 18" fill="none" stroke="#222" stroke-width="1.400"><circle cx="10.500" cy="7" r="5.300"/><path d="M6.800 11L1.500 16.500"/></svg><span class="ml-[11px]" data-w="128">Type here to search</span>
    <svg class="ml-auto w-[76px] h-[38px]" viewBox="259 729 76 38">
      <path d="M259 751q14 1 22 6 12 5 26 3 14-2 28-4" fill="none" stroke="#5f8a4e" stroke-width="4"/><path d="M262 750q14 1 22 6" fill="none" stroke="#8fb070"/>
      <path d="M301 757q9 2 13-4-6-3-11-9-4-8 1-12 7-4 13 2 6 8 4 14-3 9-12 11z" fill="#b5622f"/><path d="M307 733q8 1 10 10 0 6-3 9M303 738q2 8 10 10" stroke="#e09a68" stroke-width="1.800" fill="none"/>
      <path d="M280 747q-3-6 3-8l2-4 3 4q5 2 4 7 8-2 13 4 3 7-3 9-9 1-14-3-6-3-8-9z" fill="#cc7a45"/><path d="M283 748q3 5 8 7l-1-7z" fill="#f5dcc0"/><path d="M284 757l3-3M294 759h9" stroke="#8f4d22" stroke-width="1.800"/><circle cx="283.500" cy="743" r=".9" fill="#222"/>
      <path d="M267 756v11M263 758l4 3 4-3M263 763l4 3 4-3M284 761v6M280 763l4 3 4-3M313 761v6M309 763l4 3 4-3" stroke="#e0b030" stroke-width="1.600" fill="none"/>
      <ellipse cx="268" cy="749" rx="3.500" ry="4" fill="#704a2c"/><ellipse cx="279" cy="738" rx="2.500" ry="3" fill="#704a2c"/><ellipse cx="302" cy="764" rx="3" ry="3.500" fill="#704a2c"/><ellipse cx="326" cy="743" rx="2.500" ry="3.500" fill="#8a6038"/><path d="M326 746q3 5 9 3" stroke="#704a2c" fill="none"/>
    </svg></div>
  <svg class="w-[48px] h-[40px]" viewBox="336 728 48 40" fill="none" stroke="#fff" stroke-width="1.200"><path d="M353.500 744.500h10v7h-10zM353.500 742v-2h10v2M353.500 754v3h10v-3M367.500 740v4M367.500 749v8"/><path d="M366 745.500h3v2.500h-3z" fill="#fff" stroke="none"/></svg>
  <svg class="w-[51px] h-[40px]" viewBox="384 728 51 40"><path d="M404 737.500h8q3 0 4 4.500l-4 2-3 12h-5q-6 0-4-6l2-8q1-4.500 2-4.500z" fill="#1d8bf0"/><path d="M400 749l2-8h6l-4 15q-6-1-4-7z" fill="#3fcf9a"/><path d="M409 758.500q3 0 4-4.500l4-12q6 0 4 7l-3 6q-1 3.500-5 3.500z" fill="#f06a8c"/><path d="M416 742q6 0 5.500 5l-1 4-6-1z" fill="#b45cf0"/><path d="M402 755l11-1-3 4.500h-3q-4 0-5-3.500z" fill="#f5b942"/><path d="M408.500 751l2.500-8h3.500l-2.500 8z" fill="#26343a"/></svg>
  <svg class="w-[49px] h-[40px]" viewBox="0 0 49 40"><circle cx="25" cy="20" r="12" fill="#1578c8"/><path d="M13 20Q14 8 25 8q12 1 12 11 0 6-8 6-4 0-4-2 3-2 1-5-5-5-13 2z" fill="#2fb8c8"/><path d="M27 8q10 2 10 11 0 6-8 6-4 0-4-2 3-2 1-5 6-4 1-10z" fill="#4bd67c"/><path d="M13 20q3-5 9-5-4 3-3 8 2 6 8 7 4 0 7-2-4 5-11 4-10-2-10-12z" fill="#1560b0"/></svg>
  <svg class="w-[49px] h-[40px]" viewBox="0 0 49 40"><path d="M14 10h8l2 2h11v18H14z" fill="#e8a820"/><path d="M14 14h21v16H14z" fill="#fcd45c"/><path d="M17 22h15v8h-4v-4h-7v4h-4z" fill="#3a94dc"/><path d="M6 37h39v3H6z" fill="#76b9ed"/></svg>
  <svg class="w-[49px] h-[40px]" viewBox="0 0 49 40"><circle cx="25" cy="21" r="11" fill="#f53a4a"/><path d="M15 14l2 3q3-1 4 1 3 0 4-4 0-5 3-6 1 4 4 5 5 6 3 13-3 6-10 6Q14 31 14 22q0-5 1-8z" fill="#ff9a1a"/><circle cx="25" cy="22" r="5.500" fill="#7440d8"/><path d="M29 9q1 4 4 6 3 5 1 9-1-5-5-7 0-5 0-8z" fill="#ffe03a"/></svg>
  <svg class="w-[49px] h-[40px]" viewBox="0 0 49 40"><circle cx="25" cy="20" r="12" fill="#30a852"/><path d="M14.600 14h10.400h10.400A12 12 0 0 1 25 32l5-9z" fill="#fbc116"/><path d="M14.600 14A12 12 0 0 1 35.400 14H25l-5 8z" fill="#ea4335"/><circle cx="25" cy="20" r="5.500" fill="#4285f4" stroke="#fff" stroke-width="1.500"/><circle cx="31" cy="26.500" r="6.500" fill="#f4511e"/><text x="28.500" y="30" font-size="9" fill="#fff">S</text><path d="M6 37h39v3H6z" fill="#76b9ed"/></svg>
  <svg class="w-[49px] h-[40px] bg-[#4d5b5d]" viewBox="0 0 49 40"><path d="M12 8h24v24H12z" fill="#6f8430"/><path d="M12 26q12-8 24-6v12H12z" fill="#e8ecd8"/><text x="14" y="17" font-size="9.500" font-weight="700" fill="#fff" textLength="20">SED</text><path d="M0 37h49v3H0z" fill="#76b9ed"/></svg>
  <svg class="w-[49px] h-[40px]" viewBox="0 0 49 40"><path d="M12 8h24v24H12z" fill="#5b2f7c"/><path d="M12 26q12-8 24-6v12H12z" fill="#e4dcec"/><text x="14.500" y="17" font-size="9.500" font-weight="700" fill="#fff" textLength="19">TSP</text><path d="M5 37h39v3H5z" fill="#76b9ed"/></svg>
  <svg class="w-[49px] h-[40px]" viewBox="0 0 49 40"><path d="M15 8h20v24H13V11z" fill="#f2f6fc" stroke="#8aa8d8"/><path d="M30 14h5M30 18h5M30 22h5M30 26h5" stroke="#3a6ac0"/><text x="13" y="25" font-size="17" font-weight="700" fill="#1d50b0" textLength="18" lengthAdjust="spacingAndGlyphs">W</text><path d="M5 37h39v3H5z" fill="#76b9ed"/></svg>
  <svg class="w-[49px] h-[40px]" viewBox="0 0 49 40"><path d="M12 8h24v24H12z" fill="#e8862c"/><path d="M12 26q12-8 24-6v12H12z" fill="#f8e4d0"/><text x="13" y="17" font-size="9.500" font-weight="700" fill="#fff" textLength="22" lengthAdjust="spacingAndGlyphs">WED</text><path d="M5 37h39v3H5z" fill="#76b9ed"/></svg>
  <svg class="ml-auto w-[145px] h-[40px]" viewBox="1063 728 145 40" fill="none" stroke="#fff" stroke-width="1.200"><circle cx="1084.500" cy="745.500" r="6.500" fill="#f59a1e" stroke="none"/><path d="M1071 759q-4-1-4-5 1-5 6-4 2-6 8-5 5 1 6 6 5 1 4 5-1 3-4 3z" fill="#a9ccfa" stroke="none"/><path d="M1117.500 751l5.500-6 5.500 6"/><rect x="1142.500" y="744.500" width="7" height="8" rx="1"/><path d="M1149.500 747l3-1.500v6l-3-1.500M1143 741.500q4-2 8 0M1143 755.500q4 2 8 0"/><circle cx="1171" cy="748" r="7"/><ellipse cx="1171" cy="748" rx="3.200" ry="7"/><path d="M1164 748h14M1165 744.500h12M1165 751.500h8"/><circle cx="1175.500" cy="752.500" r="3.500" fill="#2b3433"/><path d="M1173.500 755l4-4.500M1187 746h2.500l3.500-3.500v11l-3.500-3.500h-2.500zM1195.500 745.500l5 5M1200.500 745.500l-5 5"/></svg>
  <div class="ml-[5px] flex items-center"><span data-w="23">ENG</span></div>
  <div class="ml-[12px] w-[60px] flex flex-col items-center pt-[5px] gap-[6px]"><span data-w="27">15:53</span><span data-w="58">07-10-2025</span></div>
  <svg class="w-[58px] h-[40px]" viewBox="1308 728 58 40"><path d="M1326 740h15v12h-9l-3 4v-4h-3z" fill="#fff"/><path d="M1328.500 743.500h10M1328.500 746.500h10M1328.500 749.500h7" stroke="#444"/><circle cx="1340" cy="755" r="7.500" fill="#3a3a36" stroke="#999"/><text x="1337" y="759" font-size="11" fill="#fff">3</text><path d="M1361.500 728v40" stroke="#666"/></svg>
</footer>

<script>
  // Property rows: [indented, name, name width, value, value width]
  const rows = [
    [0,'SPICE',30,'',0],[1,'MODEL',39,'[ ]',10],[1,'ORDER',37,'84',12],[1,'PARAMETER',65,'PULSE(VLow$',71],
    [1,'PINORDER',56,'Pos Neg',43],[1,'PREFIX',36,'V',7],[1,'PRIMITIVE',53,'True',22],[0,'ROUND',41,'0',6],
    [0,'FallTime',44,'5ns',18],[0,'Freq',23,'1.0/${Period}',68],[0,'Period',34,'200ns',30],[0,'PulseWidth',60,'95ns',24],
    [0,'RiseTime',47,'5ns',18],[0,'VHigh',30,'5v',12]];
  document.getElementById('rows').innerHTML = rows.map(([ind, n, nw, v, vw], i) => {
    const icon = '<svg class="w-[9px] h-[9px] shrink-0" viewBox="0 0 9 9"><use href="#' + (i ? 'boxp' : 'box') + '"/></svg>';
    const name = '<span data-w="' + nw + '">' + n + '</span>';
    return '<div class="h-[19px] flex"><div class="w-[15px] bg-[#c8c8c8] flex items-center pl-[3px]">' + (ind ? '' : icon) + '</div>' +
      (ind ? '<div class="w-[83px] border-b border-[#c8c8c8] flex items-center gap-[6px] pl-[1px] overflow-hidden">' + icon + name
           : '<div class="w-[83px] border-b border-[#c8c8c8] flex items-center pl-[2px] ' + (i ? '' : 'text-[#888]') + '">' + name) +
      '</div><div class="flex-1 border-b border-l border-[#c8c8c8] text-[#00f] flex items-center pl-[3px]">' +
      (vw ? '<span data-w="' + vw + '">' + v + '</span>' : '') + '</div></div>';
  }).join('');

  function fit() {
    if (getComputedStyle(document.body).display !== 'flex') { setTimeout(fit, 10); return; }
    const labels = [...document.querySelectorAll('[data-w]')];
    const natural = labels.map(e => {
      const r = document.createRange();
      r.selectNodeContents(e);
      return r.getBoundingClientRect().width;
    });
    labels.forEach((e, i) => {
      e.style.width = e.dataset.w + 'px';
      e.style.whiteSpace = 'pre';
      e.style.transform = 'scaleX(' + e.dataset.w / natural[i] + ')';
    });
  }
  fit();

  // Snap grid with a cross at every tenth point
  let p = '';
  for (let i = -28; i < 60; i++) for (let j = -6; j < 36; j++) {
    const x = Math.round(509 + i * 11.1), y = Math.round(192 + j * 11.08);
    p += 'M' + x + ' ' + y + 'h1v1h-1z';
    if (i % 10 === 0 && j % 10 === 0) p += 'M' + (x - 1) + ' ' + y + 'h3v1h-3zM' + x + ' ' + (y - 1) + 'h1v3h-1z';
  }
  document.getElementById('dots').setAttribute('d', p);
</script>
</body>
</html>
